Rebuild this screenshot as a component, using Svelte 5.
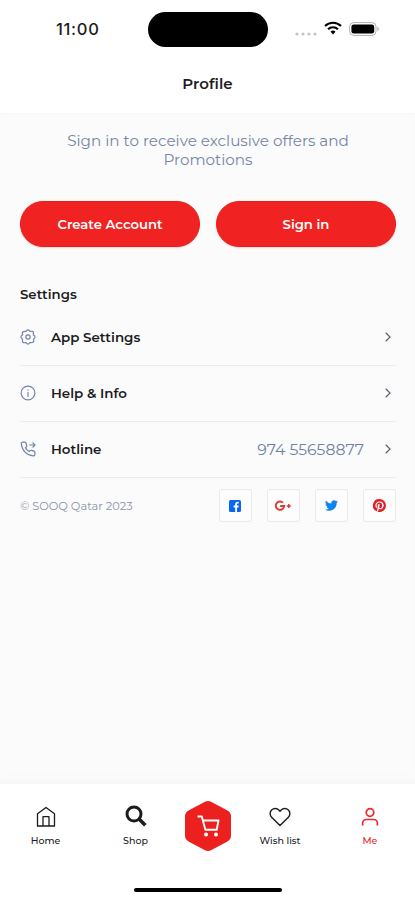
<script lang="ts">
    interface Row {
        label: string;
        icon: "gear" | "info" | "phone";
        value?: string;
    }

    const rows: Row[] = [
        { label: "App Settings", icon: "gear" },
        { label: "Help & Info", icon: "info" },
        { label: "Hotline", icon: "phone", value: "974 55658877" },
    ];
</script>

<div class="screen">
    <div class="status-bar">
        <span class="clock">11:00</span>
        <span class="island"></span>
        <div class="status-icons">
            <svg class="dots" width="22" height="4" viewBox="0 0 22 4" fill="#c4c4c4">
                <circle cx="2" cy="2" r="1.6" />
                <circle cx="8" cy="2" r="1.6" />
                <circle cx="14" cy="2" r="1.6" />
                <circle cx="20" cy="2" r="1.6" />
            </svg>
            <svg class="wifi" width="18" height="14" viewBox="0 0 18 14" fill="none" stroke="#000" stroke-width="2.1">
                <path d="M1 5.1a11.4 11.4 0 0 1 16 0" />
                <path d="M4 8.2a7.2 7.2 0 0 1 10 0" />
                <path d="M9 13.4l2.5-2.6a3.6 3.6 0 0 0-5 0z" fill="#000" stroke="none" />
            </svg>
            <svg class="battery" width="31" height="14" viewBox="0 0 31 14">
                <rect x=".6" y=".6" width="26.4" height="12.8" rx="4" fill="none" stroke="#b0b0b0" />
                <rect x="2.4" y="2.4" width="22.8" height="9.2" rx="2.4" />
                <path d="M28.4 4.8v4.4c1.9-.7 1.9-3.7 0-4.4z" fill="#aaa" />
            </svg>
        </div>
    </div>

    <header class="title">Profile</header>

    <main>
        <p class="intro">Sign in to receive exclusive offers and<br />Promotions</p>

        <div class="buttons">
            <button>Create Account</button>
            <button>Sign in</button>
        </div>

        <h2>Settings</h2>

        <div class="rows">
            {#each rows as { label, icon, value }}
                <div class="row">
                    <svg class="row-icon" width="16" height="16" viewBox="0 0 24 24" fill="none" stroke="currentColor" stroke-width="1.8" stroke-linecap="round" stroke-linejoin="round">
                        {#if icon === "gear"}
                            <circle cx="12" cy="12" r="3.2" />
                            <path d="M9.5 3.2Q12-.4 14.5 3.2L15.4 3.6Q19.8 2.8 20.2 5.2L20 8.4L20.8 9.5Q24.4 12 20.8 14.5L20.4 15.4Q21.2 19.8 18.8 20.2L15.4 20.4L14.5 20.8Q12 24.4 9.5 20.8L8.6 20.4Q4.2 21.2 3.8 18.8L3.6 15.4L3.2 14.5Q-.4 12 3.2 9.5L3.6 8.6Q2.8 4.2 5.2 3.8L8.4 3.7Z" />
                        {:else if icon === "info"}
                            <circle cx="12" cy="12" r="10.3" />
                            <path d="M12 11v6M12 7.2v.4" />
                        {:else}
                            <path d="M22.3 17v3.1a2.2 2.2 0 0 1-2.4 2.2C10 21.5 2.7 14 1.9 4.2A2.2 2.2 0 0 1 4.1 1.8h3.1c1 0 1.8.7 2 1.8.2 1.2.5 2.2.9 3.2.3.8.1 1.6-.5 2.2L8.2 10.4a16 16 0 0 0 5.5 5.5l1.4-1.4c.6-.6 1.4-.8 2.2-.5 1 .4 2 .7 3.2.8 1 .2 1.8 1.1 1.8 2.2z" />
                            <path d="M14.5 6h8M19.3 2.8L22.5 6l-3.2 3.2" />
                        {/if}
                    </svg>
                    <span class="label">{label}</span>
                    {#if value}
                        <span class="value">{value}</span>
                    {/if}
                    <svg class="chevron" width="6" height="10" viewBox="0 0 6 10" fill="none" stroke="currentColor" stroke-width="1.2">
                        <path d="M.7.8L5 5L.7 9.2" />
                    </svg>
                </div>
            {/each}
        </div>

        <div class="about">
            <span class="copyright">© SOOQ Qatar 2023</span>
            <div class="socials">
                <span class="social">
                    <svg width="12" height="12" viewBox="0 0 12 12">
                        <rect width="12" height="12" rx="1.6" fill="#0866f0" />
                        <path d="M6.2 12V7.4H4.6V5.6h1.6V4.3c0-1.6.9-2.5 2.3-2.5.6 0 1.2.1 1.2.1v1.5h-.8c-.8 0-.9.5-.9 1v1.2h1.7l-.3 1.8H8V12z" fill="#fff" />
                    </svg>
                </span>
                <span class="social">
                    <svg width="18" height="12" viewBox="0 0 18 12" fill="none" stroke="#d93a36">
                        <path d="M9 2.7A4.2 4.2 0 1 0 10.2 6H6.2" stroke-width="1.9" />
                        <path d="M12.8 6h4M14.8 4v4" stroke-width="1.5" />
                    </svg>
                </span>
                <span class="social">
                    <svg width="13" height="13" viewBox="0 0 24 24" fill="#0a84f0">
                        <path d="M24 4.6a10 10 0 0 1-2.8.8 4.9 4.9 0 0 0 2.1-2.7 10 10 0 0 1-3.1 1.2 4.9 4.9 0 0 0-8.4 4.5A14 14 0 0 1 1.7 3.1a4.9 4.9 0 0 0 1.5 6.6 4.9 4.9 0 0 1-2.2-.6 4.9 4.9 0 0 0 3.9 4.9 5 5 0 0 1-2.2.1 4.9 4.9 0 0 0 4.6 3.4A9.9 9.9 0 0 1 0 19.5a14 14 0 0 0 21.5-12.4A10 10 0 0 0 24 4.6z" />
                    </svg>
                </span>
                <span class="social">
                    <svg width="13" height="13" viewBox="0 0 24 24" fill="#e01f26">
                        <path d="M12 0a12 12 0 0 0-4.4 23.2c-.1-1-.2-2.4 0-3.4l1.4-6s-.3-.7-.3-1.8c0-1.7 1-2.9 2.2-2.9 1 0 1.5.8 1.5 1.7 0 1-.7 2.6-1 4-.3 1.2.6 2.2 1.8 2.2 2.1 0 3.8-2.2 3.8-5.5 0-2.9-2.1-4.9-5-4.9-3.4 0-5.4 2.6-5.4 5.2 0 1 .4 2.1.9 2.7.1.1.1.2.1.4l-.4 1.4c0 .2-.2.3-.4.2-1.5-.7-2.4-2.9-2.4-4.7 0-3.8 2.8-7.3 7.9-7.3 4.2 0 7.4 3 7.4 6.9 0 4.1-2.6 7.5-6.2 7.5-1.2 0-2.4-.6-2.8-1.4l-.7 2.9c-.3 1-1 2.3-1.5 3.1A12 12 0 1 0 12 0z" />
                    </svg>
                </span>
            </div>
        </div>
    </main>

    <nav>
        <div class="tab">
            <svg width="20" height="21" viewBox="0 0 20 21" fill="none" stroke="currentColor" stroke-width="1.3" stroke-linejoin="round">
                <path d="M1.5 19.5V7.3L10 1l8.5 6.3v12.2z" />
                <path d="M7 19.5v-9.3h6v9.3" />
            </svg>
            <span>Home</span>
        </div>
        <div class="tab">
            <svg class="search" width="22" height="22" viewBox="0 0 22 22" fill="none" stroke="currentColor">
                <circle cx="9" cy="9" r="7" stroke-width="3" />
                <path d="M14 14l6.3 6.3" stroke-width="3.6" />
            </svg>
            <span>Shop</span>
        </div>
        <div class="cart">
            <svg width="48" height="52" viewBox="0 0 48 52">
                <path d="M20.5 2Q24 0 27.5 2L43.5 10.6Q47 12.5 47 16.5V35.5Q47 39.5 43.5 41.4L27.5 50Q24 52 20.5 50L4.5 41.4Q1 39.5 1 35.5V16.5Q1 12.5 4.5 10.6Z" fill="#ed2020" />
                <path d="M13.5 16.5h4.3l3.6 13.3h11.3L34.5 20.5H19" fill="none" stroke="#fff" stroke-width="1.9" stroke-linejoin="round" />
                <circle cx="22" cy="34.5" r="2" fill="#fff" />
                <circle cx="32" cy="34.5" r="2" fill="#fff" />
            </svg>
        </div>
        <div class="tab">
            <svg width="22" height="20" viewBox="0 0 22 20" fill="none" stroke="currentColor" stroke-width="1.4" stroke-linejoin="round">
                <path d="M11 18.5L2.6 10.2A5.1 5.1 0 0 1 2.6 3C4.7 1 8 1 9.8 3L11 4.3L12.2 3C14 1 17.3 1 19.4 3a5.1 5.1 0 0 1 0 7.2z" />
            </svg>
            <span>Wish list</span>
        </div>
        <div class="tab active">
            <svg width="18" height="19" viewBox="0 0 18 19" fill="none" stroke="currentColor" stroke-width="1.7">
                <circle cx="9" cy="5" r="3.8" />
                <path d="M1.6 18v-2.5a3.5 3.5 0 0 1 3.5-3.5h7.8a3.5 3.5 0 0 1 3.5 3.5V18" />
            </svg>
            <span>Me</span>
        </div>
    </nav>
    <div class="home-indicator"><span></span></div>
</div>

<style>
    :global(body) {
        margin: 0;
    }

    .screen {
        display: flex;
        flex-direction: column;
        box-sizing: border-box;
        width: 415px;
        height: 900px;
        overflow: hidden;
        background: #fff;
        color: #1c1c1e;
        font-family: Montserrat, Inter, "Open Sans", sans-serif;
    }

    .status-bar {
        display: grid;
        grid-template-columns: 148px 120px 1fr;
        align-items: center;
        height: 58px;
        box-sizing: border-box;
    }

    .clock {
        padding-left: 56px;
        font-family: Inter, sans-serif;
        font-size: 16.5px;
        font-weight: 500;
        letter-spacing: 0.7px;
    }

    .island {
        height: 35px;
        border-radius: 18px;
        background: #000;
    }

    .status-icons {
        display: flex;
        align-items: center;
        padding-left: 27px;
    }

    .dots {
        margin-top: 9px;
    }

    .wifi {
        margin: -3px 7px 0 7px;
    }

    .battery {
        margin-top: -1px;
    }

    .title {
        height: 55px;
        line-height: 52px;
        text-align: center;
        font-size: 15px;
        font-weight: 600;
        letter-spacing: 0.05px;
    }

    main {
        flex: 1;
        padding: 18px 19px 0 20px;
        background: #fbfbfb;
        box-shadow: inset 0 1px 0 #f7f7f7, inset 0 -9px 8px -5px #f6f6f6;
    }

    .intro {
        margin: 0;
        text-align: center;
        font-size: 15.2px;
        line-height: 19px;
        color: #7586a5;
        white-space: nowrap;
    }

    .buttons {
        display: grid;
        grid-template-columns: 1fr 1fr;
        gap: 16px;
        margin-top: 32px;
    }

    button {
        height: 46px;
        padding: 0;
        border: 1px solid #ea1b1b;
        border-radius: 23px;
        background: #f12222;
        box-shadow: 0 1px 2px rgba(0, 0, 0, 0.12);
        color: #fff;
        font-family: inherit;
        font-size: 13.2px;
        font-weight: 600;
    }

    h2 {
        margin: 37px 0 0;
        font-size: 13.3px;
        font-weight: 600;
        line-height: 20px;
    }

    .rows {
        margin-top: 6px;
    }

    .row {
        display: flex;
        align-items: center;
        box-sizing: border-box;
        height: 56px;
        padding: 0 5px 1px 0;
        border-bottom: 1px solid #ebebed;
    }

    .row-icon {
        color: #7184a5;
    }

    .label {
        flex: 1;
        margin-left: 15px;
        font-size: 13.4px;
        font-weight: 600;
    }

    .value {
        margin-right: 21px;
        font-size: 15.7px;
        color: #6f82a3;
    }

    .chevron {
        color: #5a6270;
    }

    .about {
        display: flex;
        align-items: center;
        justify-content: space-between;
        margin-top: 11px;
    }

    .copyright {
        font-size: 11.4px;
        color: #8b94a8;
    }

    .socials {
        display: flex;
        gap: 15px;
    }

    .social {
        display: flex;
        align-items: center;
        justify-content: center;
        box-sizing: border-box;
        width: 33px;
        height: 33px;
        padding-right: 1px;
        border: 1px solid #e9e9ea;
        border-radius: 3px;
        background: #fdfdfd;
    }

    nav {
        display: grid;
        grid-template-columns: 91px 89px 55px 90px 90px;
        height: 90px;
        padding-top: 15px;
        box-sizing: border-box;
        background: #fff;
    }

    .tab {
        display: flex;
        flex-direction: column;
        align-items: center;
    }

    .tab svg {
        height: 22px;
        margin-top: 7px;
    }

    .tab .search {
        margin: 6px 0 1px;
    }

    .tab span {
        margin-top: 6px;
        font-size: 9.5px;
        font-weight: 500;
        line-height: 14px;
        white-space: nowrap;
    }

    .active {
        color: #e92a2e;
    }

    .cart {
        display: flex;
        align-items: flex-start;
        justify-content: center;
        padding-top: 1px;
    }

    .home-indicator {
        display: flex;
        justify-content: center;
        height: 26px;
        padding-top: 14px;
        box-sizing: border-box;
    }

    .home-indicator span {
        width: 148px;
        height: 4px;
        border-radius: 2px;
        background: #000;
    }
</style>
